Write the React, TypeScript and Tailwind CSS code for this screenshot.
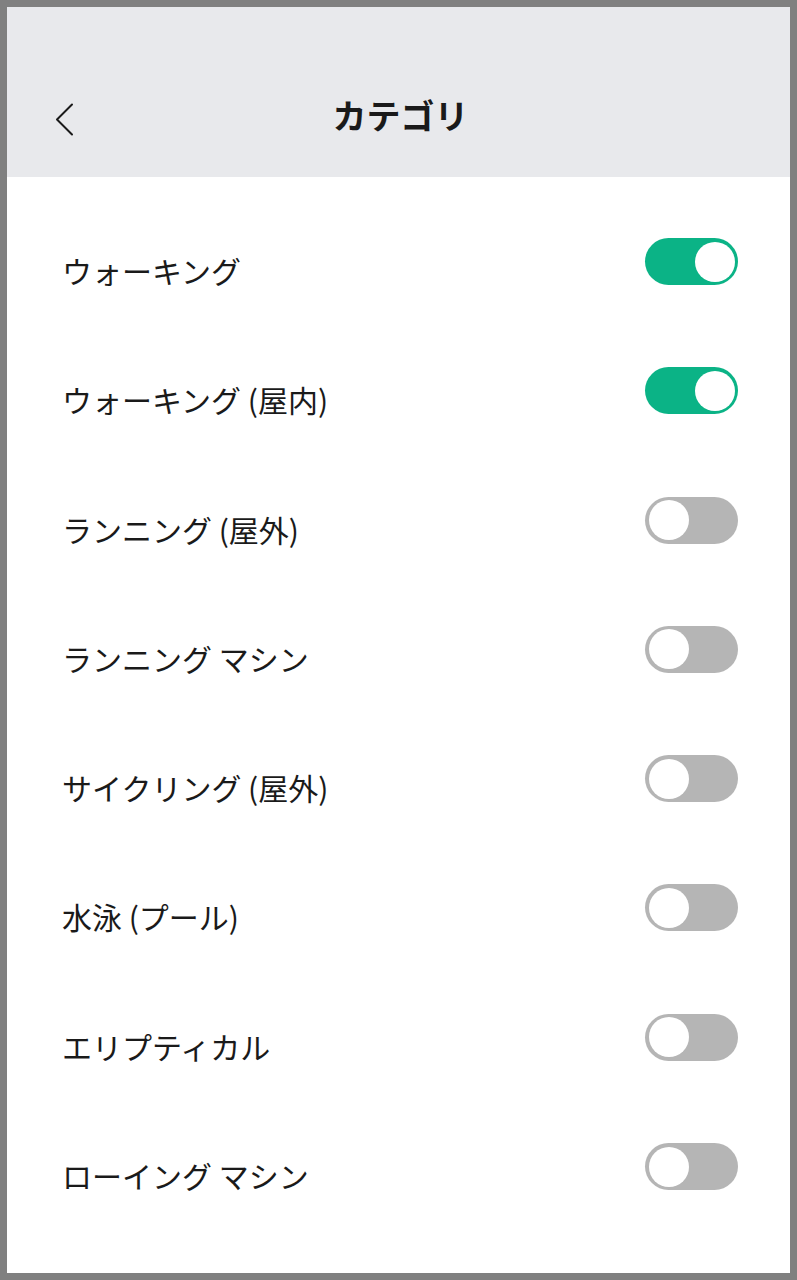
import React, { useState } from 'react';

const categories = [
  { label: 'ウォーキング', on: true },
  { label: 'ウォーキング (屋内)', on: true },
  { label: 'ランニング (屋外)', on: false },
  { label: 'ランニング マシン', on: false },
  { label: 'サイクリング (屋外)', on: false },
  { label: '水泳 (プール)', on: false },
  { label: 'エリプティカル', on: false },
  { label: 'ローイング マシン', on: false },
];

const Toggle: React.FC<{ on: boolean; onClick: () => void }> = ({ on, onClick }) => (
  <button
    onClick={onClick}
    className={`flex h-[47px] w-[93px] items-center rounded-full px-[3.5px] ${
      on ? 'justify-end bg-[#0bb386]' : 'justify-start bg-[#b5b5b5]'
    }`}
  >
    <span className="block h-[40px] w-[40px] rounded-full bg-white" />
  </button>
);

const App: React.FC = () => {
  const [items, setItems] = useState(categories);

  const toggle = (i: number) =>
    setItems(prev => prev.map((it, idx) => (idx === i ? { ...it, on: !it.on } : it)));

  return (
    <div
      className="h-[1280px] w-[797px] border-[7px] border-[#808080] bg-white"
      style={{ fontFamily: '"Noto Sans CJK JP", "Noto Sans", sans-serif' }}
    >
      <div className="flex h-[170px] items-end bg-[#e8e9ec] pb-[42px]">
        <div className="relative flex h-[40px] w-full items-center justify-center">
          <button className="absolute left-[43px] top-[4px] p-1">
            <svg width="20" height="33" viewBox="0 0 20 33" fill="none">
              <path d="M18 1.5 L3 16.5 L18 31.5" stroke="#1a1a1a" strokeWidth="2" strokeLinecap="round" strokeLinejoin="round" />
            </svg>
          </button>
          <h1 className="ml-[4px] text-[34px] font-bold leading-[40px] text-[#1a1a1a]">カテゴリ</h1>
        </div>
      </div>

      <div className="pt-[24px]">
        {items.map((it, i) => (
          <div key={it.label} className="flex h-[129.3px] items-start justify-between pl-[55px] pr-[52px]">
            <span className="mt-[49px] text-[30px] leading-[40px] text-[#1a1a1a]">{it.label}</span>
            <div className="mt-[37px]">
              <Toggle on={it.on} onClick={() => toggle(i)} />
            </div>
          </div>
        ))}
      </div>
    </div>
  );
};

export default App;
